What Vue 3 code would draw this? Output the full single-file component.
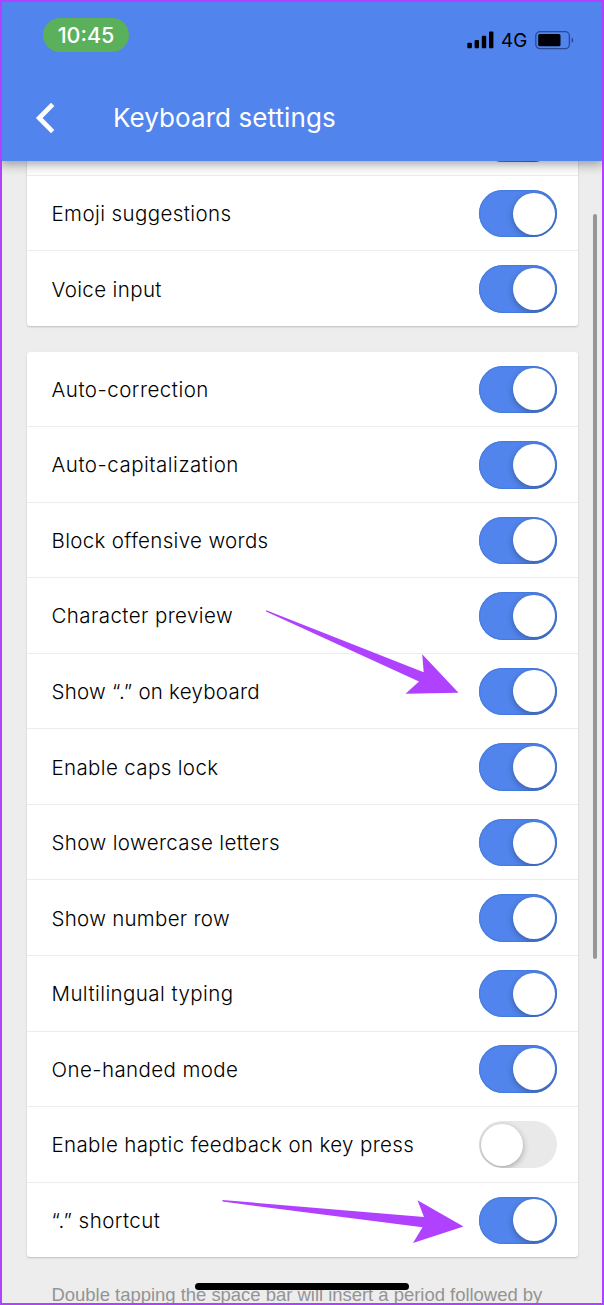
<script setup>
const groups = [
  {
    rows: [
      { label: '', on: true, tracking: 0 },
      { label: 'Emoji suggestions', on: true, tracking: 0.41 },
      { label: 'Voice input', on: true, tracking: 0.38 },
    ],
  },
  {
    rows: [
      { label: 'Auto-correction', on: true, tracking: 0.5 },
      { label: 'Auto-capitalization', on: true, tracking: 0.5 },
      { label: 'Block offensive words', on: true, tracking: 0.34 },
      { label: 'Character preview', on: true, tracking: 0.41 },
      { label: 'Show “.” on keyboard', on: true, tracking: 0.25 },
      { label: 'Enable caps lock', on: true, tracking: 0.36 },
      { label: 'Show lowercase letters', on: true, tracking: 0.37 },
      { label: 'Show number row', on: true, tracking: 0.28 },
      { label: 'Multilingual typing', on: true, tracking: 0.42 },
      { label: 'One-handed mode', on: true, tracking: 0.41 },
      { label: 'Enable haptic feedback on key press', on: false, tracking: 0.36 },
      { label: '“.” shortcut', on: true, tracking: 0.44 },
    ],
  },
]
</script>

<template>
  <div class="screen">
    <header class="header">
      <div class="status">
        <span class="time">10:45</span>
        <div class="indicators">
          <svg class="signal" width="27" height="18" viewBox="0 0 27 18">
            <rect x="0.3" y="11.7" width="4.6" height="5.5" rx="1" />
            <rect x="7.6" y="8.9" width="4.4" height="8.3" rx="1" />
            <rect x="14.8" y="4.7" width="4.4" height="12.5" rx="1" />
            <rect x="22" y="0.4" width="4.4" height="16.8" rx="1" />
          </svg>
          <span class="network">4G</span>
          <svg class="battery" width="39" height="19" viewBox="0 0 39 19">
            <rect x="0.8" y="0.7" width="33.6" height="17" rx="4.2" fill="none" stroke="#264b94" stroke-width="1.3" />
            <rect x="3.2" y="3.1" width="22.3" height="12.2" rx="1.6" fill="#000008" />
            <path d="M36.6 6.6q1.6.7 1.6 2.7t-1.6 2.7z" fill="#264b94" />
          </svg>
        </div>
      </div>
      <div class="titlebar">
        <svg class="back" width="22" height="32" viewBox="0 0 22 32">
          <path d="M18.7 2.4L5.2 16L18.7 29.6" fill="none" stroke="#fff" stroke-width="4.7" />
        </svg>
        <h1>Keyboard settings</h1>
      </div>
    </header>

    <main class="content">
      <section v-for="(g, i) in groups" :key="i" class="card">
        <div v-for="(r, j) in g.rows" :key="j" class="row">
          <span class="label" :style="{ letterSpacing: r.tracking + 'px' }">{{ r.label }}</span>
          <span class="toggle" :class="{ on: r.on }"><span class="knob"></span></span>
        </div>
      </section>
      <p class="note">Double tapping the space bar will insert a period followed by</p>
    </main>

    <div class="scrollbar"></div>
    <div class="home"></div>
    <svg class="arrows" width="604" height="1305" viewBox="0 0 604 1305">
      <path d="M266.3 610.2L423.7 672.2L422.2 654.3L458.5 692.8L405.5 693.8L419 681.5L266 611.4Z" />
      <path d="M222.5 1200L424 1217L417.5 1200.2L463.5 1226.5L413 1243L422.5 1227.3L222.5 1201.6Z" />
    </svg>
    <div class="frame"></div>
  </div>
</template>

<style>
body {
  margin: 0;
  overflow: hidden;
}
</style>

<style scoped>
.screen {
  position: relative;
  width: 604px;
  height: 1305px;
  overflow: hidden;
  background: #ededed;
  font-family: Inter, "Liberation Sans", sans-serif;
}
.header {
  position: relative;
  z-index: 2;
  height: 160.5px;
  background: #5184ec;
  box-shadow: 0 3px 11px rgba(0, 0, 0, 0.38);
}
.status {
  display: flex;
  justify-content: space-between;
  align-items: flex-start;
  height: 75px;
  padding: 18px 30px 0 43px;
  box-sizing: border-box;
}
.time {
  width: 86px;
  height: 34px;
  border-radius: 17px;
  background: #5bb05c;
  color: #fff;
  font-size: 21.5px;
  font-weight: 500;
  line-height: 35px;
  text-align: center;
}
.indicators {
  display: flex;
  align-items: flex-start;
  color: #000008;
}
.signal {
  margin-top: 13px;
}
.network {
  width: 27px;
  margin: 10px 7px 0 7px;
  font-size: 18.8px;
  line-height: 26px;
}
.battery {
  margin-top: 13px;
}
.titlebar {
  display: flex;
  align-items: center;
  height: 86px;
  padding-left: 34px;
}
.back {
  margin-right: 57px;
}
h1 {
  margin: 0;
  color: #fff;
  font-size: 26px;
  font-weight: 400;
  letter-spacing: 0.08px;
  line-height: 36px;
  white-space: nowrap;
}
.content {
  margin-top: -60.2px;
  padding: 0 26.5px;
}
.card {
  margin-bottom: 25.6px;
  border-radius: 3px;
  background: #fff;
  box-shadow: 0 1px 2px rgba(0, 0, 0, 0.2);
}
.row {
  display: flex;
  align-items: center;
  justify-content: space-between;
  height: 75.55px;
  padding: 0.8px 20.5px 0 25px;
  box-sizing: border-box;
  border-bottom: 1px solid #ececec;
}
.row:last-child {
  height: 74.6px;
  border-bottom: 0;
}
.label {
  color: #000;
  font-size: 20.5px;
  font-weight: 300;
  white-space: nowrap;
}
.toggle {
  display: flex;
  align-items: center;
  width: 78.5px;
  height: 47.5px;
  padding: 0 2.3px;
  box-sizing: border-box;
  border-radius: 24px;
  background: #e9e9e9;
  overflow: hidden;
}
.toggle.on {
  justify-content: flex-end;
  background: #5184ec;
  box-shadow: inset 0 0 1px 0.6px #3972cf;
}
.knob {
  width: 42px;
  height: 42px;
  border-radius: 50%;
  background: #fff;
  box-shadow: 0 2px 6px rgba(0, 0, 0, 0.3);
}
.note {
  margin: 0 0 0 25px;
  color: #949494;
  font-family: "Liberation Sans", sans-serif;
  font-size: 18.5px;
  letter-spacing: -0.03px;
  line-height: 24px;
  white-space: nowrap;
}
.scrollbar {
  position: absolute;
  z-index: 3;
  left: 593px;
  top: 214px;
  width: 4.3px;
  height: 745px;
  border-radius: 2px;
  background: #979797;
}
.home {
  position: absolute;
  z-index: 3;
  left: 195px;
  top: 1283px;
  width: 214px;
  height: 7px;
  border-radius: 4px;
  background: #000;
}
.arrows {
  position: absolute;
  z-index: 4;
  left: 0;
  top: 0;
  fill: #b041ff;
}
.frame {
  position: absolute;
  z-index: 5;
  inset: 0;
  border: 2px solid #b041ff;
}
</style>
